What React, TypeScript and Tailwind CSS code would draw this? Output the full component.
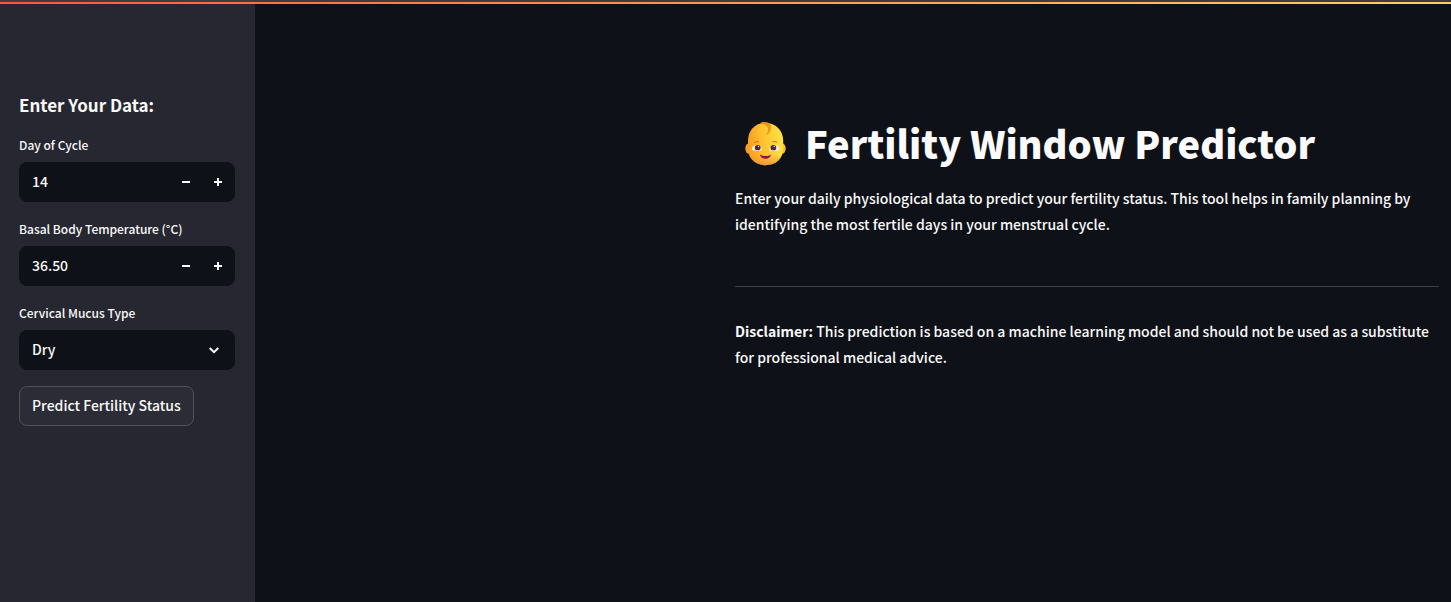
import { useState } from "react";

function BabyIcon() {
  return (
    <svg viewBox="0 0 60 62" className="h-[62px] w-[60px] shrink-0" role="img" aria-label="Baby">
      <defs>
        <linearGradient id="skin" x1="0" y1="0.1" x2="1" y2="0">
          <stop offset="0" stopColor="#f8a022" />
          <stop offset="0.35" stopColor="#fec02e" />
          <stop offset="1" stopColor="#ffe545" />
        </linearGradient>
        <linearGradient id="chin" x1="0" y1="0" x2="0" y2="1">
          <stop offset="0.75" stopColor="#f58a30" stopOpacity="0" />
          <stop offset="1" stopColor="#ee7d48" stopOpacity="0.7" />
        </linearGradient>
        <linearGradient id="curl" x1="0" y1="0" x2="1" y2="1">
          <stop offset="0" stopColor="#e88a16" />
          <stop offset="1" stopColor="#eda11e" />
        </linearGradient>
      </defs>
      <ellipse cx="14" cy="36.500" rx="3.700" ry="5.200" fill="#f59c2e" />
      <ellipse cx="47" cy="36.500" rx="3.700" ry="5.200" fill="#fdbb36" />
      <path
        d="M30.500 11C20.500 11 13 18 13 29v8c0 9 7 16.200 17.600 16.200S48.200 46 48.200 37v-8C48.200 18 40.500 11 30.500 11Z"
        fill="url(#skin)"
      />
      <path
        d="M30.500 11C20.500 11 13 18 13 29v8c0 9 7 16.200 17.600 16.200S48.200 46 48.200 37v-8C48.200 18 40.500 11 30.500 11Z"
        fill="url(#chin)"
      />
      <path
        d="M25 11.300c1-1 3-1.500 5-1.300 4.500.3 6.500 3 6.100 6.600-.4 3.700-2.900 6-5.600 6.400 1.600-1.700 2.800-3.600 2.500-6-.3-2.900-2.700-4.900-8-5.700Z"
        fill="url(#curl)"
      />
      <path d="M19.500 30.400c1.100-.8 2.700-1.100 4-.7M37.700 29.700c1.300-.4 2.900-.1 4 .7" fill="none" stroke="#d9641e" strokeWidth="1" strokeLinecap="round" />
      <path d="M16.800 37.800c0-3 2.200-4.800 5-4.800s5 2 5 5c-2.800 1.300-7.400 1.400-10-.2ZM34.500 38c0-3 2.200-5 5-5s5 1.800 5 4.800c-2.600 1.600-7.200 1.500-10 .2Z" fill="#fff0ea" />
      <ellipse cx="22.700" cy="35.700" rx="2.900" ry="2.600" fill="#4c2c2e" />
      <ellipse cx="38.400" cy="35.700" rx="2.900" ry="2.600" fill="#4c2c2e" />
      <circle cx="23.500" cy="34.600" r=".7" fill="#fff" />
      <circle cx="39.200" cy="34.600" r=".7" fill="#fff" />
      <path d="M24.900 42.500c1.500 1 3.400 1.500 5.600 1.500s4.100-.5 5.600-1.500c-.3 2.500-2.600 4.200-5.600 4.200s-5.300-1.700-5.600-4.200Z" fill="#950a5c" />
    </svg>
  );
}

type StepperProps = {
  id: string;
  label: string;
  initial: number;
  step: number;
  digits: number;
};

function NumberField({ id, label, initial, step, digits }: StepperProps) {
  const [value, setValue] = useState(initial.toFixed(digits));
  const change = (by: number) => setValue((Number(value) + by).toFixed(digits));
  return (
    <div className="flex flex-col gap-1.5">
      <label htmlFor={id} className="text-xs leading-[22px] font-medium">
        {label}
      </label>
      <div className="flex h-10 overflow-hidden rounded-lg border border-[#0e1117] bg-[#0e1117]">
        <input
          id={id}
          type="text"
          inputMode="decimal"
          value={value}
          onChange={(e) => setValue(e.target.value)}
          className="min-w-0 flex-1 bg-transparent px-3 pb-0.5 text-sm font-medium outline-none"
        />
        <button type="button" aria-label={`Decrease ${label}`} onClick={() => change(-step)} className="flex w-8 items-center justify-center">
          <svg viewBox="0 0 8 8" className="size-2" fill="currentColor">
            <path d="M0 3h8v2H0z" />
          </svg>
        </button>
        <button type="button" aria-label={`Increase ${label}`} onClick={() => change(step)} className="flex w-8 items-center justify-center">
          <svg viewBox="0 0 8 8" className="size-2" fill="currentColor">
            <path d="M3 0h2v3h3v2H5v3H3V5H0V3h3z" />
          </svg>
        </button>
      </div>
    </div>
  );
}

export default function App() {
  return (
    <div className="flex min-h-screen flex-col bg-[#0e1117] font-['Noto_Sans_CJK_SC',sans-serif] text-[#fafafa]">
      <div className="h-1 border-t-2 border-[#3c3d44] bg-linear-to-r from-[#ff5349] to-[#ffd166]" />
      <div className="flex flex-1">
        <aside className="w-[255px] shrink-0 bg-[#262730] pt-[87px] pr-5 pl-[19px]">
          <h2 className="text-[17px] leading-7 font-bold">Enter Your Data:</h2>
          <form className="flex flex-col gap-4 pt-[15px]" onSubmit={(e) => e.preventDefault()}>
            <NumberField id="cycle-day" label="Day of Cycle" initial={14} step={1} digits={0} />
            <NumberField id="temperature" label="Basal Body Temperature (°C)" initial={36.5} step={0.01} digits={2} />
            <div className="flex flex-col gap-1.5">
              <label htmlFor="mucus" className="text-xs leading-[22px] font-medium">
                Cervical Mucus Type
              </label>
              <div className="grid">
                <select
                  id="mucus"
                  defaultValue="Dry"
                  className="col-start-1 row-start-1 h-10 w-full appearance-none rounded-lg border border-[#0e1117] bg-[#0e1117] px-3 pb-0.5 text-sm font-medium outline-none"
                >
                  <option>Dry</option>
                  <option>Sticky</option>
                  <option>Creamy</option>
                  <option>Egg White</option>
                </select>
                <svg
                  viewBox="0 0 10 7"
                  className="pointer-events-none col-start-1 row-start-1 mr-4 h-[7px] w-[10px] self-center justify-self-end"
                  fill="none"
                  stroke="currentColor"
                  strokeWidth="2"
                >
                  <path d="M.7 1 5 5.200 9.300 1" />
                </svg>
              </div>
            </div>
            <button type="submit" className="h-10 self-start rounded-lg border border-[#515259] bg-[#2b2c36] px-3 pb-0.5 text-sm font-medium">
              Predict Fertility Status
            </button>
          </form>
        </aside>
        <main className="flex min-w-0 flex-1 justify-end pt-[108px] pr-3">
          <div className="w-full max-w-[704px]">
            <h1 className="flex items-center gap-[10px] text-[38px] leading-[62px] font-black">
              <BabyIcon />
              Fertility Window Predictor
            </h1>
            <p className="pt-[11px] text-sm leading-[26px] font-medium">
              Enter your daily physiological data to predict your fertility status. This tool helps in family planning by
              identifying the most fertile days in your menstrual cycle.
            </p>
            <hr className="mt-[49px] mb-[31px] border-[#3d3f44]" />
            <p className="text-sm leading-[26px] font-medium">
              <strong className="font-bold">Disclaimer:</strong> This prediction is based on a machine learning model and should
              not be used as a substitute for professional medical advice.
            </p>
          </div>
        </main>
      </div>
    </div>
  );
}
